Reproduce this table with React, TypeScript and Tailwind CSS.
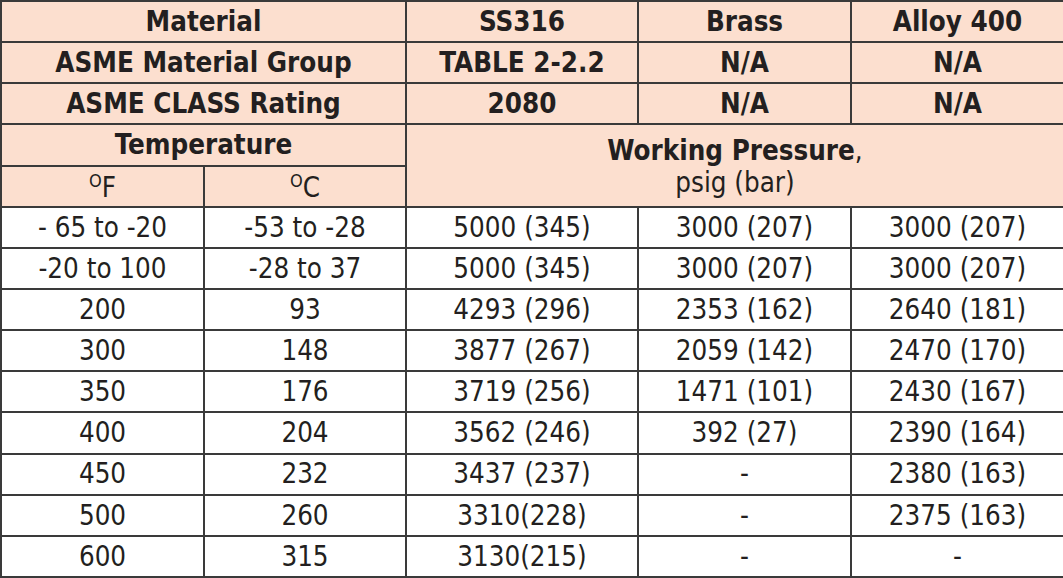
const rows: [string, string, string, string, string][] = [
  ["- 65 to -20", "-53 to -28", "5000 (345)", "3000 (207)", "3000 (207)"],
  ["-20 to 100", "-28 to 37", "5000 (345)", "3000 (207)", "3000 (207)"],
  ["200", "93", "4293 (296)", "2353 (162)", "2640 (181)"],
  ["300", "148", "3877 (267)", "2059 (142)", "2470 (170)"],
  ["350", "176", "3719 (256)", "1471 (101)", "2430 (167)"],
  ["400", "204", "3562 (246)", "392 (27)", "2390 (164)"],
  ["450", "232", "3437 (237)", "-", "2380 (163)"],
  ["500", "260", "3310(228)", "-", "2375 (163)"],
  ["600", "315", "3130(215)", "-", "-"],
];

const cell = "border-2 border-[#3a3a3a] text-center align-middle p-0 leading-none";
const head = `${cell} bg-[#fcdfcf] font-bold`;

export default function App() {
  return (
    <div
      className="w-[1063px] h-[578px] bg-white text-[#231f20] overflow-hidden"
      style={{ fontFamily: '"DejaVu Sans Condensed", "DejaVu Sans", sans-serif' }}
    >
      <table className="w-[1063px] h-[578px] border-collapse table-fixed text-[27.5px]">
        <colgroup>
          <col className="w-[203px]" />
          <col className="w-[202px]" />
          <col className="w-[232px]" />
          <col className="w-[213px]" />
          <col className="w-[213px]" />
        </colgroup>
        <tbody>
          <tr className="h-[41px]">
            <td colSpan={2} className={head}>Material</td>
            <td className={head}>SS316</td>
            <td className={head}>Brass</td>
            <td className={head}>Alloy 400</td>
          </tr>
          <tr className="h-[41px]">
            <td colSpan={2} className={head}>ASME Material Group</td>
            <td className={head}>TABLE 2-2.2</td>
            <td className={head}>N/A</td>
            <td className={head}>N/A</td>
          </tr>
          <tr className="h-[41px]">
            <td colSpan={2} className={head}>ASME CLASS Rating</td>
            <td className={head}>2080</td>
            <td className={head}>N/A</td>
            <td className={head}>N/A</td>
          </tr>
          <tr className="h-[41px]">
            <td colSpan={2} className={head}>Temperature</td>
            <td colSpan={3} rowSpan={2} className={`${cell} bg-[#fcdfcf]`}>
              <div className="flex flex-col items-center gap-[4px] pt-[2px]">
                <span>
                  <span className="font-bold">Working Pressure</span>,
                </span>
                <span>psig (bar)</span>
              </div>
            </td>
          </tr>
          <tr className="h-[41px]">
            <td className={`${cell} bg-[#fcdfcf]`}>
              <span className="relative top-[2px]"><sup className="text-[18px] relative top-[-10px]">O</sup>F</span>
            </td>
            <td className={`${cell} bg-[#fcdfcf]`}>
              <span className="relative top-[2px]"><sup className="text-[18px] relative top-[-10px]">O</sup>C</span>
            </td>
          </tr>
          {rows.map((r, i) => (
            <tr key={i} className="h-[41px]">
              {r.map((v, j) => (
                <td key={j} className={cell}>{v}</td>
              ))}
            </tr>
          ))}
        </tbody>
      </table>
    </div>
  );
}
